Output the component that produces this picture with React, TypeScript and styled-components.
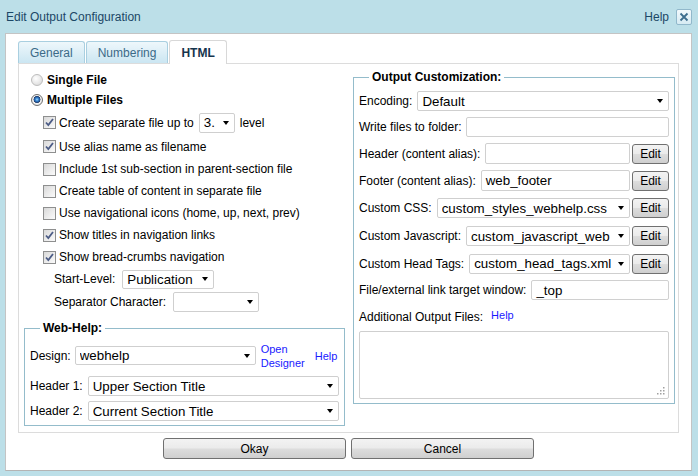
import React from 'react'
import styled, { createGlobalStyle } from 'styled-components'

const GlobalStyle = createGlobalStyle`
  html, body {
    margin: 0;
    padding: 0;
  }
  body {
    font-family: 'Liberation Sans', Arial, sans-serif;
    font-size: 12px;
    color: #000;
  }
  * {
    box-sizing: border-box;
  }
`

const Window = styled.div`
  width: 698px;
  height: 476px;
  background: #bcdfe8;
  display: flex;
  flex-direction: column;
  padding: 0 6px 5px 5px;
`

const TitleBar = styled.div`
  height: 33px;
  display: flex;
  align-items: center;
  padding-left: 1px;
  color: #1b4766;
`

const Title = styled.div`
  flex: 1;
  font-size: 12px;
`

const TitleHelp = styled.span`
  font-size: 12px;
  margin-right: 7px;
`

const CloseButton = styled.div`
  width: 16px;
  height: 16px;
  border: 1px solid #91b8cb;
  border-radius: 2px;
  background: linear-gradient(#f2f9fc, #d6ebf3);
  display: flex;
  align-items: center;
  justify-content: center;
`

const Content = styled.div`
  flex: 1;
  background: #fff;
  border: 1px solid #c4c4c4;
  border-bottom-color: #b4b4b4;
  padding: 6px 12px 0 12px;
  display: flex;
  flex-direction: column;
`

const TabBar = styled.div`
  display: flex;
  align-items: flex-end;
  height: 23px;
  position: relative;
  z-index: 1;
`

const Tab = styled.div<{ $active?: boolean }>`
  height: ${(p) => (p.$active ? '24px' : '22px')};
  margin-bottom: ${(p) => (p.$active ? '-1px' : '0')};
  margin-right: 1px;
  padding: 0 11px;
  display: flex;
  align-items: center;
  border: 1px solid ${(p) => (p.$active ? '#d8d8d8' : '#a9cfe0')};
  border-bottom: none;
  border-radius: 3px 3px 0 0;
  background: ${(p) => (p.$active ? '#fff' : 'linear-gradient(#eef7fb, #cbe6f2)')};
  color: ${(p) => (p.$active ? '#16344d' : '#3b6a88')};
  font-weight: ${(p) => (p.$active ? 'bold' : 'normal')};
  font-size: 12px;
`

const Panel = styled.div`
  height: 370px;
  border: 1px solid #dcdcdc;
  display: grid;
  grid-template-columns: 321px 322px;
  column-gap: 8px;
  align-items: start;
  padding: 6px 4px 0 5px;
`

const LeftCol = styled.div`
  display: flex;
  flex-direction: column;
`

const RadioRow = styled.div`
  height: 20px;
  display: flex;
  align-items: center;
  padding-left: 7px;
  gap: 4px;
  font-weight: bold;
`

const RadioDot = styled.span<{ $checked?: boolean }>`
  width: 12px;
  height: 12px;
  border-radius: 50%;
  border: 1px solid ${(p) => (p.$checked ? '#6f6f6f' : '#bdbdbd')};
  background: ${(p) =>
    p.$checked
      ? 'radial-gradient(circle at 50% 45%, #a8dcff 0, #3f8fd8 18%, #1d4f93 38%, #2a3f66 44%, #f4f4f4 50%, #d6d6d6 100%)'
      : 'radial-gradient(circle at 40% 35%, #ffffff 0, #e6e6e6 60%, #d2d2d2 100%)'};
`

const CheckList = styled.div`
  display: flex;
  flex-direction: column;
  padding-left: 19px;
`

const CheckRow = styled.div<{ $h?: number }>`
  height: ${(p) => p.$h || 22}px;
  display: flex;
  align-items: center;
  gap: 3px;
`

const Box = styled.span`
  width: 13px;
  height: 13px;
  border: 1px solid #8e8f8f;
  background: linear-gradient(135deg, #d9d9d9, #fbfbfb);
  display: flex;
  align-items: center;
  justify-content: center;
  flex-shrink: 0;
`

const Inline = styled.span<{ $ml?: number }>`
  margin-left: ${(p) => p.$ml || 0}px;
  display: flex;
  align-items: center;
`

const SubRow = styled.div<{ $h?: number }>`
  height: ${(p) => p.$h || 22}px;
  display: flex;
  align-items: center;
  gap: 7px;
  padding-left: 30px;
`

const SelectBox = styled.div<{ $w?: number; $h?: number }>`
  ${(p) => (p.$w ? `width: ${p.$w}px;` : 'flex: 1; min-width: 0;')}
  height: ${(p) => p.$h || 20}px;
  border: 1px solid #cfcfcf;
  border-radius: 2px;
  background: #fff;
  display: flex;
  align-items: center;
  padding: 0 5px 0 4px;
  font-size: 13.33px;
  flex-shrink: 0;
`

const SelectText = styled.span`
  flex: 1;
  min-width: 0;
  overflow: hidden;
  white-space: nowrap;
`

const Arrow = styled.span`
  width: 0;
  height: 0;
  margin-left: 5px;
  border-left: 3.5px solid transparent;
  border-right: 3.5px solid transparent;
  border-top: 4px solid #000;
  flex-shrink: 0;
`

const TextInput = styled.div<{ $h?: number }>`
  flex: 1;
  min-width: 0;
  height: ${(p) => p.$h || 20}px;
  border: 1px solid #d0d0d0;
  border-radius: 2px;
  background: #fff;
  display: flex;
  align-items: center;
  padding-left: 4px;
  font-size: 13.33px;
  white-space: nowrap;
  overflow: hidden;
`

const Fieldset = styled.fieldset<{ $pt?: number }>`
  margin: 0;
  border: 1px solid #94bccb;
  padding: ${(p) => p.$pt || 7}px 5px 4px 5px;
  min-width: 0;
`

const Legend = styled.legend`
  font-weight: bold;
  font-size: 12px;
  padding: 0 3px;
  margin-left: 10px;
  line-height: 14px;
`

const WebHelp = styled(Fieldset)`
  margin-top: 8px;
`

const FieldRows = styled.div<{ $gap?: number }>`
  display: flex;
  flex-direction: column;
  gap: ${(p) => p.$gap || 6}px;
`

const FieldRow = styled.div<{ $h?: number; $gap?: number; $mt?: number }>`
  height: ${(p) => p.$h || 20}px;
  margin-top: ${(p) => p.$mt || 0}px;
  display: flex;
  align-items: center;
  gap: ${(p) => (p.$gap === undefined ? 5 : p.$gap)}px;
`

const Label = styled.span`
  white-space: nowrap;
  flex-shrink: 0;
`

const ControlGroup = styled.div`
  flex: 1;
  min-width: 0;
  display: flex;
  align-items: center;
  gap: 2px;
`

const Link = styled.span<{ $up?: number; $w?: number; $ml?: number }>`
  color: #1a1aff;
  font-size: 11px;
  line-height: 14px;
  ${(p) => (p.$w ? `width: ${p.$w}px;` : '')}
  margin-left: ${(p) => p.$ml || 0}px;
  position: relative;
  top: ${(p) => -(p.$up || 0)}px;
`

const GrayButton = styled.button<{ $w: number; $h?: number }>`
  width: ${(p) => p.$w}px;
  height: ${(p) => p.$h || 20}px;
  border: 1px solid #707070;
  border-radius: 3px;
  background: linear-gradient(#f3f3f3 0%, #ebebeb 48%, #dddddd 52%, #cfcfcf 100%);
  font-family: 'Liberation Sans', Arial, sans-serif;
  font-size: 12px;
  color: #000;
  padding: 0;
  flex-shrink: 0;
`

const AreaWrap = styled.div`
  position: relative;
  height: 68px;
  margin-top: 3px;
  border: 1px solid #cfcfcf;
  border-radius: 2px;
  background: #fff;
`

const Grip = styled.svg`
  position: absolute;
  right: 2px;
  bottom: 2px;
`

const Footer = styled.div`
  display: flex;
  justify-content: center;
  gap: 5px;
  margin-top: 5px;
`

const Check = () => (
  <svg width="11" height="11" viewBox="0 0 11 11">
    <path d="M2 5.5 L4.3 8 L9 2" fill="none" stroke="#4c5c86" strokeWidth="1.8" />
  </svg>
)

const CheckItem = ({ checked, children, h }: { checked?: boolean; children: React.ReactNode; h?: number }) => (
  <CheckRow $h={h}>
    <Box>{checked && <Check />}</Box>
    {children}
  </CheckRow>
)

const Select = ({ value, w, h }: { value?: string; w?: number; h?: number }) => (
  <SelectBox $w={w} $h={h}>
    <SelectText>{value}</SelectText>
    <Arrow />
  </SelectBox>
)

const App = () => {
  return (
    <Window>
      <GlobalStyle />
      <TitleBar>
        <Title>Edit Output Configuration</Title>
        <TitleHelp>Help</TitleHelp>
        <CloseButton>
          <svg width="10" height="10" viewBox="0 0 10 10">
            <path d="M1.5 1.5 L8.5 8.5 M8.5 1.5 L1.5 8.5" stroke="#3d6e8e" strokeWidth="1.8" />
          </svg>
        </CloseButton>
      </TitleBar>
      <Content>
        <TabBar>
          <Tab>General</Tab>
          <Tab>Numbering</Tab>
          <Tab $active>HTML</Tab>
        </TabBar>
        <Panel>
          <LeftCol>
            <RadioRow>
              <RadioDot />
              Single File
            </RadioRow>
            <RadioRow>
              <RadioDot $checked />
              Multiple Files
            </RadioRow>
            <CheckList>
              <CheckItem checked h={25}>
                Create separate file up to
                <Inline $ml={2}>
                  <Select value="3." w={36} />
                </Inline>
                <Inline $ml={2}>level</Inline>
              </CheckItem>
              <CheckItem checked h={23}>Use alias name as filename</CheckItem>
              <CheckItem>Include 1st sub-section in parent-section file</CheckItem>
              <CheckItem>Create table of content in separate file</CheckItem>
              <CheckItem>Use navigational icons (home, up, next, prev)</CheckItem>
              <CheckItem checked>Show titles in navigation links</CheckItem>
              <CheckItem checked>Show bread-crumbs navigation</CheckItem>
            </CheckList>
            <SubRow>
              Start-Level:
              <Select value="Publication" w={92} h={19} />
            </SubRow>
            <SubRow $h={23}>
              Separator Character:
              <Select w={86} />
            </SubRow>
            <WebHelp>
              <Legend>Web-Help:</Legend>
              <FieldRows $gap={5}>
                <FieldRow $h={27} $gap={4}>
                  <Label>Design:</Label>
                  <Select value="webhelp" w={181} h={19} />
                  <Link $w={46} $ml={1}>
                    Open Designer
                  </Link>
                  <Link $ml={4}>Help</Link>
                </FieldRow>
                <FieldRow $mt={2}>
                  <Label>Header 1:</Label>
                  <Select value="Upper Section Title" />
                </FieldRow>
                <FieldRow>
                  <Label>Header 2:</Label>
                  <Select value="Current Section Title" />
                </FieldRow>
              </FieldRows>
            </WebHelp>
          </LeftCol>

          <Fieldset>
            <Legend>Output Customization:</Legend>
            <FieldRows>
              <FieldRow>
                <Label>Encoding:</Label>
                <Select value="Default" />
              </FieldRow>
              <FieldRow>
                <Label>Write files to folder:</Label>
                <TextInput />
              </FieldRow>
              <FieldRow $h={21}>
                <Label>Header (content alias):</Label>
                <ControlGroup>
                  <TextInput $h={21} />
                  <GrayButton $w={37}>Edit</GrayButton>
                </ControlGroup>
              </FieldRow>
              <FieldRow $h={21}>
                <Label>Footer (content alias):</Label>
                <ControlGroup>
                  <TextInput $h={21}>web_footer</TextInput>
                  <GrayButton $w={37}>Edit</GrayButton>
                </ControlGroup>
              </FieldRow>
              <FieldRow $h={22}>
                <Label>Custom CSS:</Label>
                <ControlGroup>
                  <Select value="custom_styles_webhelp.css" />
                  <GrayButton $w={37}>Edit</GrayButton>
                </ControlGroup>
              </FieldRow>
              <FieldRow $h={22}>
                <Label>Custom Javascript:</Label>
                <ControlGroup>
                  <Select value="custom_javascript_web" />
                  <GrayButton $w={37}>Edit</GrayButton>
                </ControlGroup>
              </FieldRow>
              <FieldRow $h={21}>
                <Label>Custom Head Tags:</Label>
                <ControlGroup>
                  <Select value="custom_head_tags.xml" />
                  <GrayButton $w={37}>Edit</GrayButton>
                </ControlGroup>
              </FieldRow>
              <FieldRow>
                <Label>File/external link target window:</Label>
                <TextInput>_top</TextInput>
              </FieldRow>
              <FieldRow $h={22} $gap={8}>
                <Label>Additional Output Files:</Label>
                <Link $up={2}>Help</Link>
              </FieldRow>
            </FieldRows>
            <AreaWrap>
              <Grip width="9" height="9" viewBox="0 0 9 9">
                <g fill="#a0a0a0">
                  <rect x="6" y="0" width="1.5" height="1.5" />
                  <rect x="3" y="3" width="1.5" height="1.5" />
                  <rect x="6" y="3" width="1.5" height="1.5" />
                  <rect x="0" y="6" width="1.5" height="1.5" />
                  <rect x="3" y="6" width="1.5" height="1.5" />
                  <rect x="6" y="6" width="1.5" height="1.5" />
                </g>
              </Grip>
            </AreaWrap>
          </Fieldset>
        </Panel>
        <Footer>
          <GrayButton $w={183} $h={21}>Okay</GrayButton>
          <GrayButton $w={183} $h={21}>Cancel</GrayButton>
        </Footer>
      </Content>
    </Window>
  )
}

export default App
